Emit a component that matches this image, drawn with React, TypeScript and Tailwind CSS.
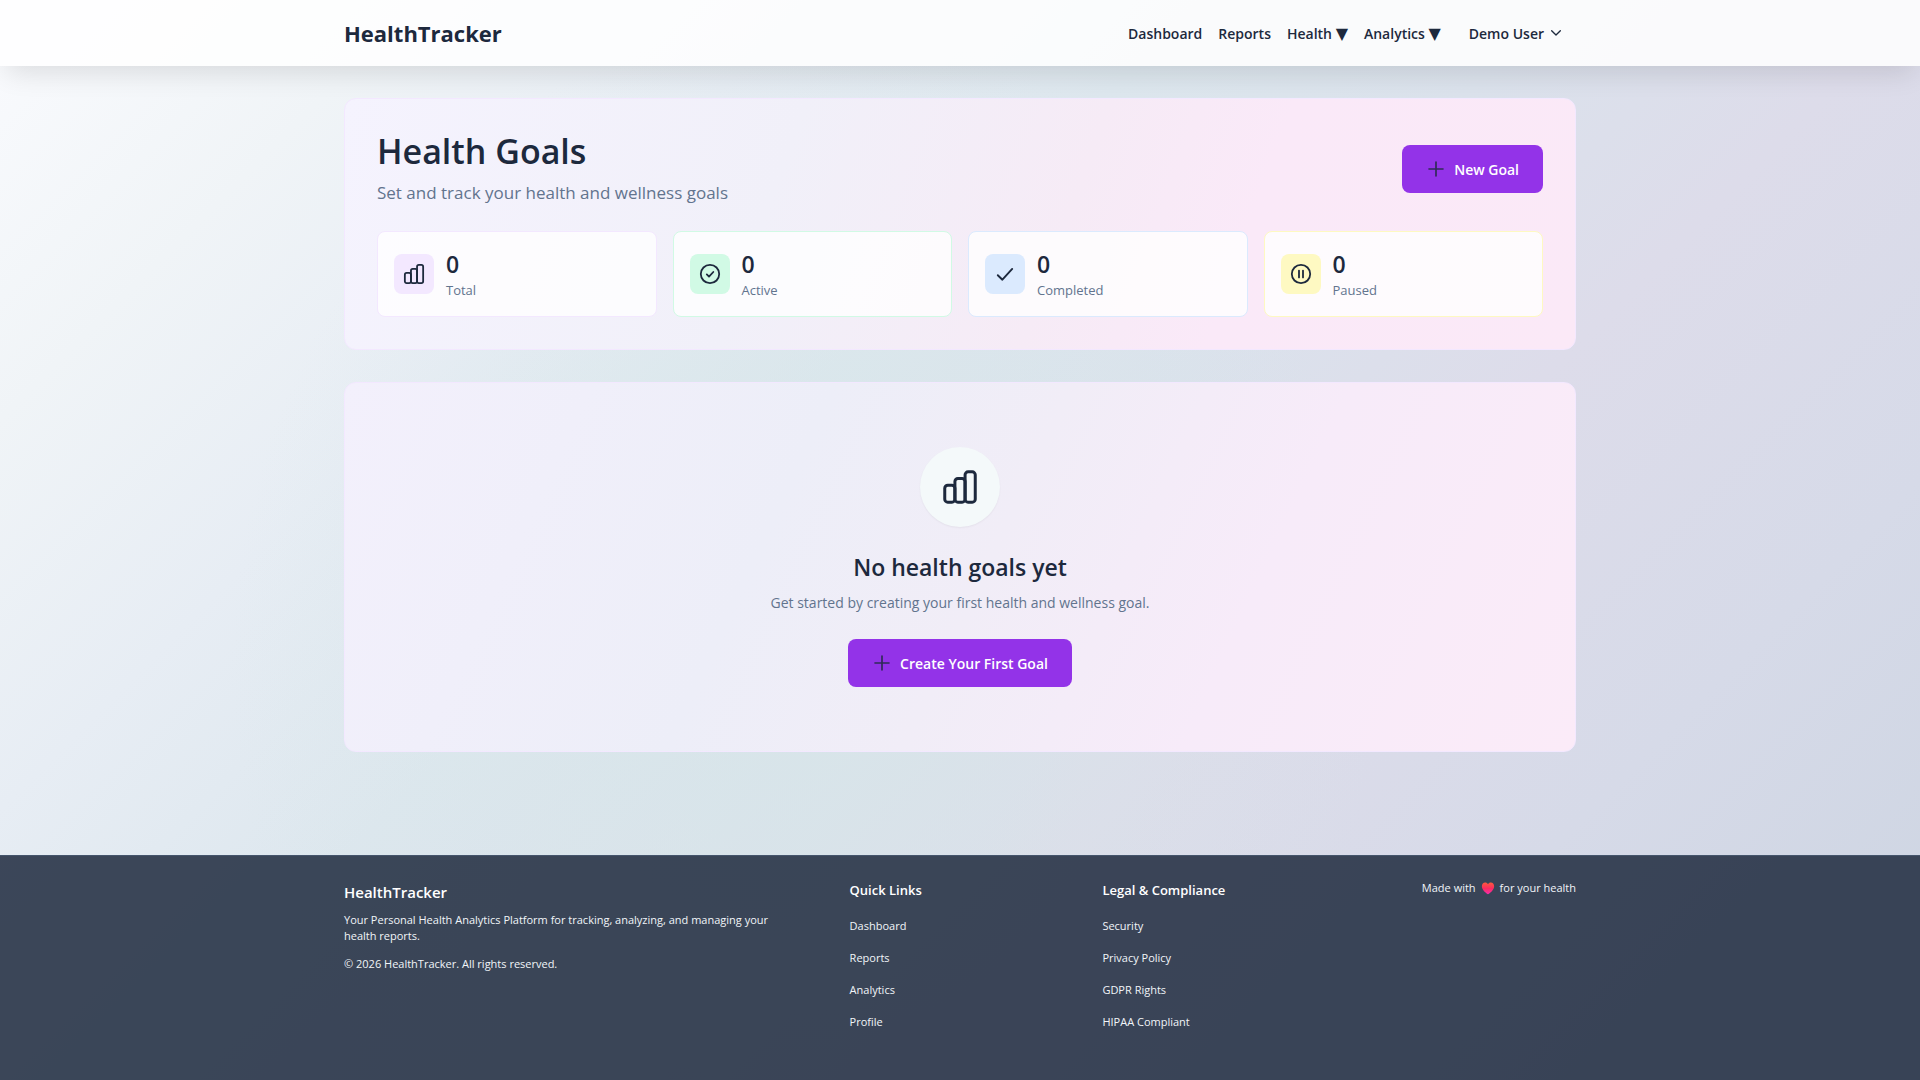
import type { ReactNode } from "react";

type IconProps = { className: string; strokeWidth?: number; children: ReactNode };

function Icon({ className, strokeWidth = 1.5, children }: IconProps) {
  return (
    <svg
      viewBox="0 0 24 24"
      fill="none"
      stroke="currentColor"
      strokeWidth={strokeWidth}
      strokeLinecap="round"
      strokeLinejoin="round"
      aria-hidden="true"
      className={className}
    >
      {children}
    </svg>
  );
}

function BarsIcon({ className }: { className: string }) {
  return (
    <Icon className={className} strokeWidth={1.8}>
      <rect x="2.85" y="10.9" width="6.1" height="10.2" rx="1.8" />
      <rect x="8.95" y="6.9" width="6.1" height="14.2" rx="1.8" />
      <rect x="15.05" y="2.9" width="6.1" height="18.2" rx="1.8" />
    </Icon>
  );
}

function PlusIcon() {
  return (
    <Icon className="size-5 text-slate-800/85" strokeWidth={2}>
      <path d="M12 3.600v16.800M3.600 12h16.800" />
    </Icon>
  );
}

const stats = [
  {
    label: "Total",
    border: "border-purple-100",
    bg: "bg-purple-100",
    icon: <BarsIcon className="size-6" />,
  },
  {
    label: "Active",
    border: "border-[#d1fae5]",
    bg: "bg-[#d1fae5]",
    icon: (
      <Icon className="size-6" strokeWidth={1.8}>
        <circle cx="12" cy="12" r="9.2" />
        <path d="m8.8 12.4 2.2 2.2 4.3-4.6" />
      </Icon>
    ),
  },
  {
    label: "Completed",
    border: "border-blue-100",
    bg: "bg-blue-100",
    icon: (
      <Icon className="size-6" strokeWidth={1.9}>
        <path d="m4.8 13.2 4.6 4.5L19.2 6.9" />
      </Icon>
    ),
  },
  {
    label: "Paused",
    border: "border-yellow-100",
    bg: "bg-yellow-100",
    icon: (
      <Icon className="size-6" strokeWidth={1.8}>
        <circle cx="12" cy="12" r="9.2" />
        <path d="M10 8.6v6.8M14 8.6v6.8" />
      </Icon>
    ),
  },
];

const footerGroups = [
  { title: "Quick Links", links: ["Dashboard", "Reports", "Analytics", "Profile"] },
  {
    title: "Legal & Compliance",
    links: ["Security", "Privacy Policy", "GDPR Rights", "HIPAA Compliant"],
  },
];

function PrimaryButton({ children }: { children: ReactNode }) {
  return (
    <button
      type="button"
      className="inline-flex h-12 items-center gap-2 rounded-lg bg-[#9333e8] px-6 text-[14px] font-semibold text-white"
    >
      <PlusIcon />
      {children}
    </button>
  );
}

function Header() {
  return (
    <header className="relative z-10 bg-white/85 shadow-[0_12px_28px_-6px_rgba(0,0,0,0.12)]">
      <div className="mx-auto flex h-[66px] max-w-7xl items-center justify-between px-6">
        <a href="#" className="text-[22px] font-bold">
          HealthTracker
        </a>
        <nav className="flex items-center gap-4 text-[14px] font-semibold">
          <a href="#">Dashboard</a>
          <a href="#">Reports</a>
          <button type="button">
            Health <span className="text-[16px]">▼</span>
          </button>
          <button type="button">
            Analytics <span className="text-[16px]">▼</span>
          </button>
          <button type="button" className="flex items-center gap-1 px-3">
            Demo User
            <Icon className="size-4" strokeWidth={2}>
              <path d="m5.500 8.500 6.500 6.500 6.500-6.500" />
            </Icon>
          </button>
        </nav>
      </div>
    </header>
  );
}

function Footer() {
  return (
    <footer className="border-t border-slate-600 bg-slate-800/85 text-[11px] text-slate-100">
      <div className="mx-auto grid max-w-7xl grid-cols-5 gap-8 px-6 pt-6 pb-[46px]">
        <div className="col-span-2">
          <h2 className="text-[15px] leading-6 font-semibold text-white">HealthTracker</h2>
          <p className="mt-2 max-w-md leading-4">
            Your Personal Health Analytics Platform for tracking, analyzing, and managing your
            health reports.
          </p>
          <p className="mt-3 leading-4">© 2026 HealthTracker. All rights reserved.</p>
        </div>
        {footerGroups.map((group) => (
          <div key={group.title}>
            <h3 className="text-[13px] leading-5 font-semibold text-white">{group.title}</h3>
            <ul className="mt-3.5 flex flex-col gap-2">
              {group.links.map((link) => (
                <li key={link} className="leading-6">
                  <a href="#">{link}</a>
                </li>
              ))}
            </ul>
          </div>
        ))}
        <p className="flex h-4 items-center justify-end gap-1 leading-4">
          Made with
          <svg viewBox="0 0 24 24" className="size-4" role="img" aria-label="love">
            <defs>
              <linearGradient id="heart" x1="0" y1="0" x2="0" y2="1">
                <stop offset="0" stopColor="#ff5a3c" />
                <stop offset="0.5" stopColor="#fb2c5e" />
                <stop offset="1" stopColor="#f62db0" />
              </linearGradient>
            </defs>
            <path
              fill="url(#heart)"
              d="M12 21.500C8 18.500 2.800 14.500 2.800 9.200 2.800 5.800 5 3.600 7.700 3.600c1.900 0 3.400 1 4.300 2.600.9-1.600 2.400-2.600 4.300-2.600 2.700 0 4.900 2.200 4.900 5.600 0 5.300-5.200 9.300-9.200 12.300Z"
            />
          </svg>
          for your health
        </p>
      </div>
    </footer>
  );
}

export default function App() {
  return (
    <div className="flex min-h-screen flex-col bg-[radial-gradient(ellipse_30%_60%_at_42%_62%,#d6e6e8b3_0%,#d6e6e800_100%),linear-gradient(135deg,#fafbfe_0%,#f0f4f7_14%,#e7edf4_27%,#dde7ee_40%,#dbe2ec_52%,#dddcea_64%,#d6dae8_80%,#ccd4e1_100%)] font-['Open_Sans','Noto_Sans','DejaVu_Sans',sans-serif] text-slate-800">
      <Header />
      <main className="mx-auto flex w-full max-w-7xl flex-1 flex-col gap-8 px-6 py-8">
        <section className="rounded-xl border border-purple-100 bg-[linear-gradient(110deg,#f5f3fe_0%,#f1f0f9_35%,#f6ebf6_58%,#fae9f8_72%,#fbe9f7_100%)] p-8">
          <div className="flex items-center justify-between">
            <div>
              <h1 className="text-[34px] leading-10 font-semibold">Health Goals</h1>
              <p className="mt-2 text-[17px] leading-7 text-slate-500">
                Set and track your health and wellness goals
              </p>
            </div>
            <PrimaryButton>New Goal</PrimaryButton>
          </div>
          <div className="mt-6 grid grid-cols-4 gap-4">
            {stats.map((stat) => (
              <div
                key={stat.label}
                className={`flex items-center gap-3 rounded-lg border bg-white/80 p-4 ${stat.border}`}
              >
                <div className={`flex size-10 items-center justify-center rounded-lg ${stat.bg}`}>
                  {stat.icon}
                </div>
                <div>
                  <p className="text-[23px] leading-8 font-semibold">0</p>
                  <p className="text-[13px] leading-5 text-slate-500">{stat.label}</p>
                </div>
              </div>
            ))}
          </div>
        </section>
        <section className="flex flex-col items-center rounded-xl border border-purple-100 bg-[linear-gradient(115deg,#f3f0fc_0%,#edeef8_35%,#f1edf7_52%,#f7ebf9_72%,#fbebf8_100%)] px-8 py-16">
          <div className="flex size-20 items-center justify-center rounded-full bg-[#f4f9fa] shadow-xs">
            <BarsIcon className="size-10" />
          </div>
          <h2 className="mt-6 text-[23px] leading-8 font-semibold">No health goals yet</h2>
          <p className="mt-2 mb-6 text-[14px] leading-6 text-slate-500">
            Get started by creating your first health and wellness goal.
          </p>
          <PrimaryButton>Create Your First Goal</PrimaryButton>
        </section>
      </main>
      <Footer />
    </div>
  );
}
